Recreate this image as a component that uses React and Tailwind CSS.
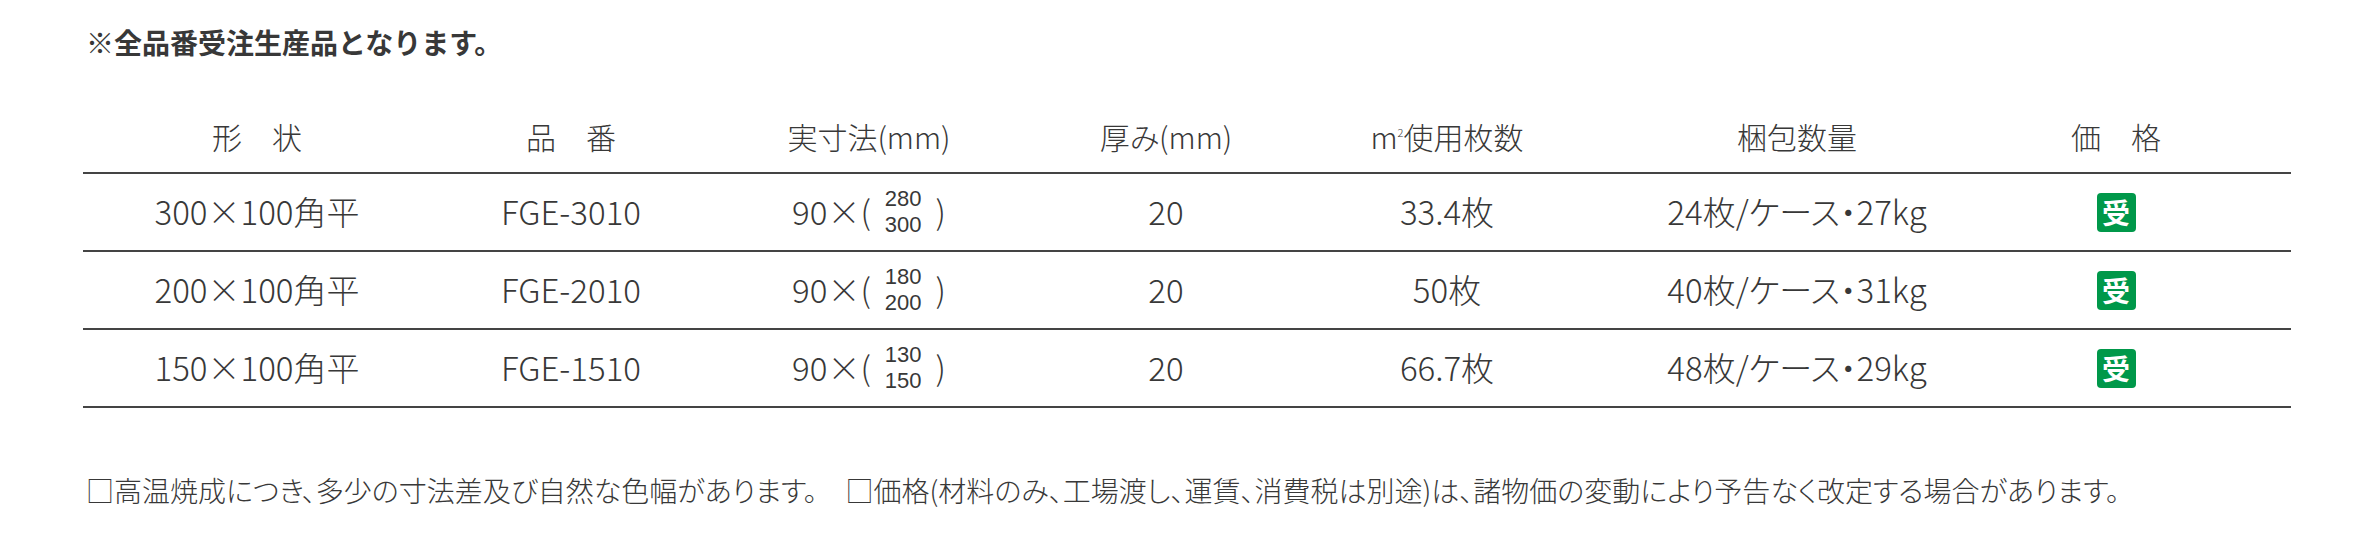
import React from "react";

const cols = "grid grid-cols-[348px_280px_316px_278px_284px_416px_222px_1fr]";

const headers = [
  "形　状",
  "品　番",
  "実寸法(mm)",
  "厚み(mm)",
  null,
  "梱包数量",
  "価　格",
];

const rows = [
  { shape: "300×100角平", code: "FGE-3010", top: "280", bottom: "300", thick: "20", per: "33.4枚", pack: "24枚/ケース・27kg" },
  { shape: "200×100角平", code: "FGE-2010", top: "180", bottom: "200", thick: "20", per: "50枚", pack: "40枚/ケース・31kg" },
  { shape: "150×100角平", code: "FGE-1510", top: "130", bottom: "150", thick: "20", per: "66.7枚", pack: "48枚/ケース・29kg" },
];

const Badge = () => (
  <span className="flex h-[39px] w-[39px] items-center justify-center rounded-[4px] bg-[#00984a] text-[28px] font-bold leading-none text-white">
    受
  </span>
);

const Size = ({ top, bottom }) => (
  <span className="flex items-center">
    <span>90×(</span>
    <span className="flex flex-col items-center px-[14px] text-[22px] leading-[26px] [font-family:'Liberation_Sans',sans-serif]">
      <span>{top}</span>
      <span>{bottom}</span>
    </span>
    <span>)</span>
  </span>
);

export default function App() {
  return (
    <div className="min-h-[554px] bg-white pt-[22px] font-light text-[#383838] [font-family:'Noto_Sans_CJK_JP','Noto_Sans',sans-serif] [font-feature-settings:'palt']">
      <p className="pl-[86px] text-[28px] font-bold leading-[40px] [font-feature-settings:normal]">
        ※全品番受注生産品となります。
      </p>

      <div className="ml-[83px] mt-[38px] w-[2208px]">
        <div className={`${cols} h-[74px] items-center border-b-2 border-[#444] text-[30px]`}>
          {headers.map((h, i) => (
            <div key={i} className="flex justify-center">
              {h === null ? (
                <span>
                  m<span className="relative -top-[12px] text-[11px]">2</span>使用枚数
                </span>
              ) : (
                h
              )}
            </div>
          ))}
          <div />
        </div>

        {rows.map((r) => (
          <div key={r.code} className={`${cols} h-[78px] items-center border-b-2 border-[#444] text-[33px]`}>
            <div className="flex justify-center">{r.shape}</div>
            <div className="flex justify-center">{r.code}</div>
            <div className="flex justify-center">
              <Size top={r.top} bottom={r.bottom} />
            </div>
            <div className="flex justify-center">{r.thick}</div>
            <div className="flex justify-center">{r.per}</div>
            <div className="flex justify-center">{r.pack}</div>
            <div className="flex justify-center">
              <Badge />
            </div>
            <div />
          </div>
        ))}
      </div>

      <p className="mt-[62px] pl-[86px] text-[28px] leading-[40px]">
        □高温焼成につき、多少の寸法差及び自然な色幅があります。　□価格(材料のみ、工場渡し、運賃、消費税は別途)は、諸物価の変動により予告なく改定する場合があります。
      </p>
    </div>
  );
}
